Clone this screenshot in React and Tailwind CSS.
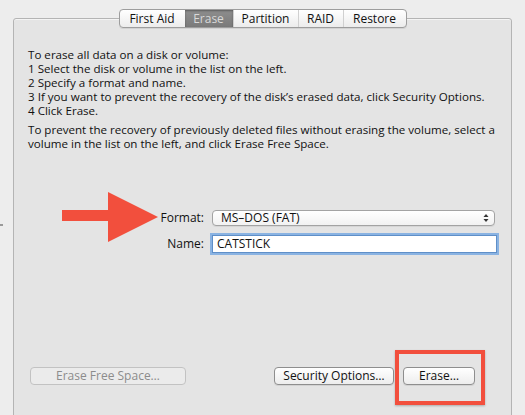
export default function App() {
  const font = { fontFamily: '"Open Sans", "DejaVu Sans", sans-serif' };
  const tabs = ["First Aid", "Erase", "Partition", "RAID", "Restore"];
  const widths = ["w-[65px]", "w-[48px]", "w-[65px]", "w-[45px]", "w-[63px]"];

  return (
    <div
      className="relative w-[525px] h-[415px] overflow-hidden bg-[#ededed] pt-[18px] px-[13px] text-[#111] text-[11px]"
      style={font}
    >
      {/* tiny mark on left edge */}
      <div className="absolute left-0 top-[224px] w-[3px] h-[2px] bg-[#9a9a9a]" />

      {/* panel */}
      <div className="h-[420px] border border-[#b4b4b4] rounded-t-[3px] bg-[#e4e4e4] shadow-[inset_0_1px_0_#f4f4f4]">
        {/* segmented tabs */}
        <div className="flex justify-center -mt-[10px]">
          <div className="flex h-[19px] rounded-[4px] border border-[#9d9d9d] bg-gradient-to-b from-[#ffffff] to-[#ececec] shadow-[0_1px_0_rgba(0,0,0,0.08)] overflow-hidden text-[12px]">
            {tabs.map((t, i) =>
              t === "Erase" ? (
                <div
                  key={t}
                  className={`${widths[i]} flex items-center justify-center bg-gradient-to-b from-[#8e8e8e] to-[#7a7a7a] text-[#d9d9d9] shadow-[inset_0_1px_2px_rgba(0,0,0,0.35)]`}
                >
                  {t}
                </div>
              ) : (
                <div
                  key={t}
                  className={`${widths[i]} flex items-center justify-center border-l border-[#d0d0d0] first:border-l-0 text-[#111]`}
                >
                  {t}
                </div>
              )
            )}
          </div>
        </div>

        {/* instructions */}
        <div className="pl-[14px] pt-[20px] leading-[14px] text-[11.6px] whitespace-nowrap">
          <p>To erase all data on a disk or volume:</p>
          <p>1 Select the disk or volume in the list on the left.</p>
          <p>2 Specify a format and name.</p>
          <p>3 If you want to prevent the recovery of the disk’s erased data, click Security Options.</p>
          <p>4 Click Erase.</p>
          <p className="mt-[5px]">
            To prevent the recovery of previously deleted files without erasing the volume, select a
            <br />
            volume in the list on the left, and click Erase Free Space.
          </p>
        </div>

        {/* format / name */}
        <div className="mt-[58px] flex flex-col gap-[8px]">
          <div className="flex items-center">
            <div className="w-[198px] text-right pr-[8px] text-[12px]">Format:</div>
            <div className="w-[283px] h-[16px] rounded-[4px] border border-[#a3a3a3] bg-gradient-to-b from-[#ffffff] to-[#f2f2f2] flex items-center justify-between pl-[8px] pr-[5px] text-[12px] shadow-[0_1px_0_rgba(0,0,0,0.06)]">
              <span>MS–DOS (FAT)</span>
              <svg width="6" height="10" viewBox="0 0 6 10">
                <path d="M0.5 4 L3 1 L5.5 4 Z" fill="#333" />
                <path d="M0.5 6 L3 9 L5.5 6 Z" fill="#333" />
              </svg>
            </div>
          </div>
          <div className="flex items-center">
            <div className="w-[198px] text-right pr-[8px] text-[12px]">Name:</div>
            <div className="w-[285px] h-[18px] bg-white border border-[#5f8fc8] shadow-[0_0_0_2px_#8ab3e2] flex items-center pl-[4px] text-[12px]">
              CATSTICK
            </div>
          </div>
        </div>

        {/* bottom buttons */}
        <div className="mt-[114px] flex items-center text-[12px]">
          <div className="ml-[16px] w-[156px] h-[18px] rounded-[4px] border border-[#c2c2c2] bg-[#ebebeb] flex items-center justify-center text-[#8c8c8c]">
            Erase Free Space…
          </div>
          <div className="ml-[88px] w-[120px] h-[18px] rounded-[4px] border border-[#8e8e8e] bg-gradient-to-b from-[#ffffff] to-[#ededed] flex items-center justify-center shadow-[0_1px_0_rgba(0,0,0,0.08)]">
            Security Options…
          </div>
          <div className="ml-[9px] w-[72px] h-[18px] rounded-[4px] border border-[#8e8e8e] bg-gradient-to-b from-[#ffffff] to-[#ededed] flex items-center justify-center shadow-[0_1px_0_rgba(0,0,0,0.08)]">
            Erase…
          </div>
        </div>
      </div>

      {/* red annotation arrow */}
      <svg className="absolute left-[60px] top-[190px]" width="100" height="54" viewBox="0 0 100 54">
        <path d="M2 20 L48 20 L48 2 L98 27 L48 52 L48 31 L2 31 Z" fill="#f24f3d" />
      </svg>

      {/* red annotation box */}
      <div className="absolute left-[395px] top-[350px] w-[90px] h-[55px] border-[4px] border-[#f24f3d] shadow-[0_1px_2px_rgba(0,0,0,0.25)]" />
    </div>
  );
}
